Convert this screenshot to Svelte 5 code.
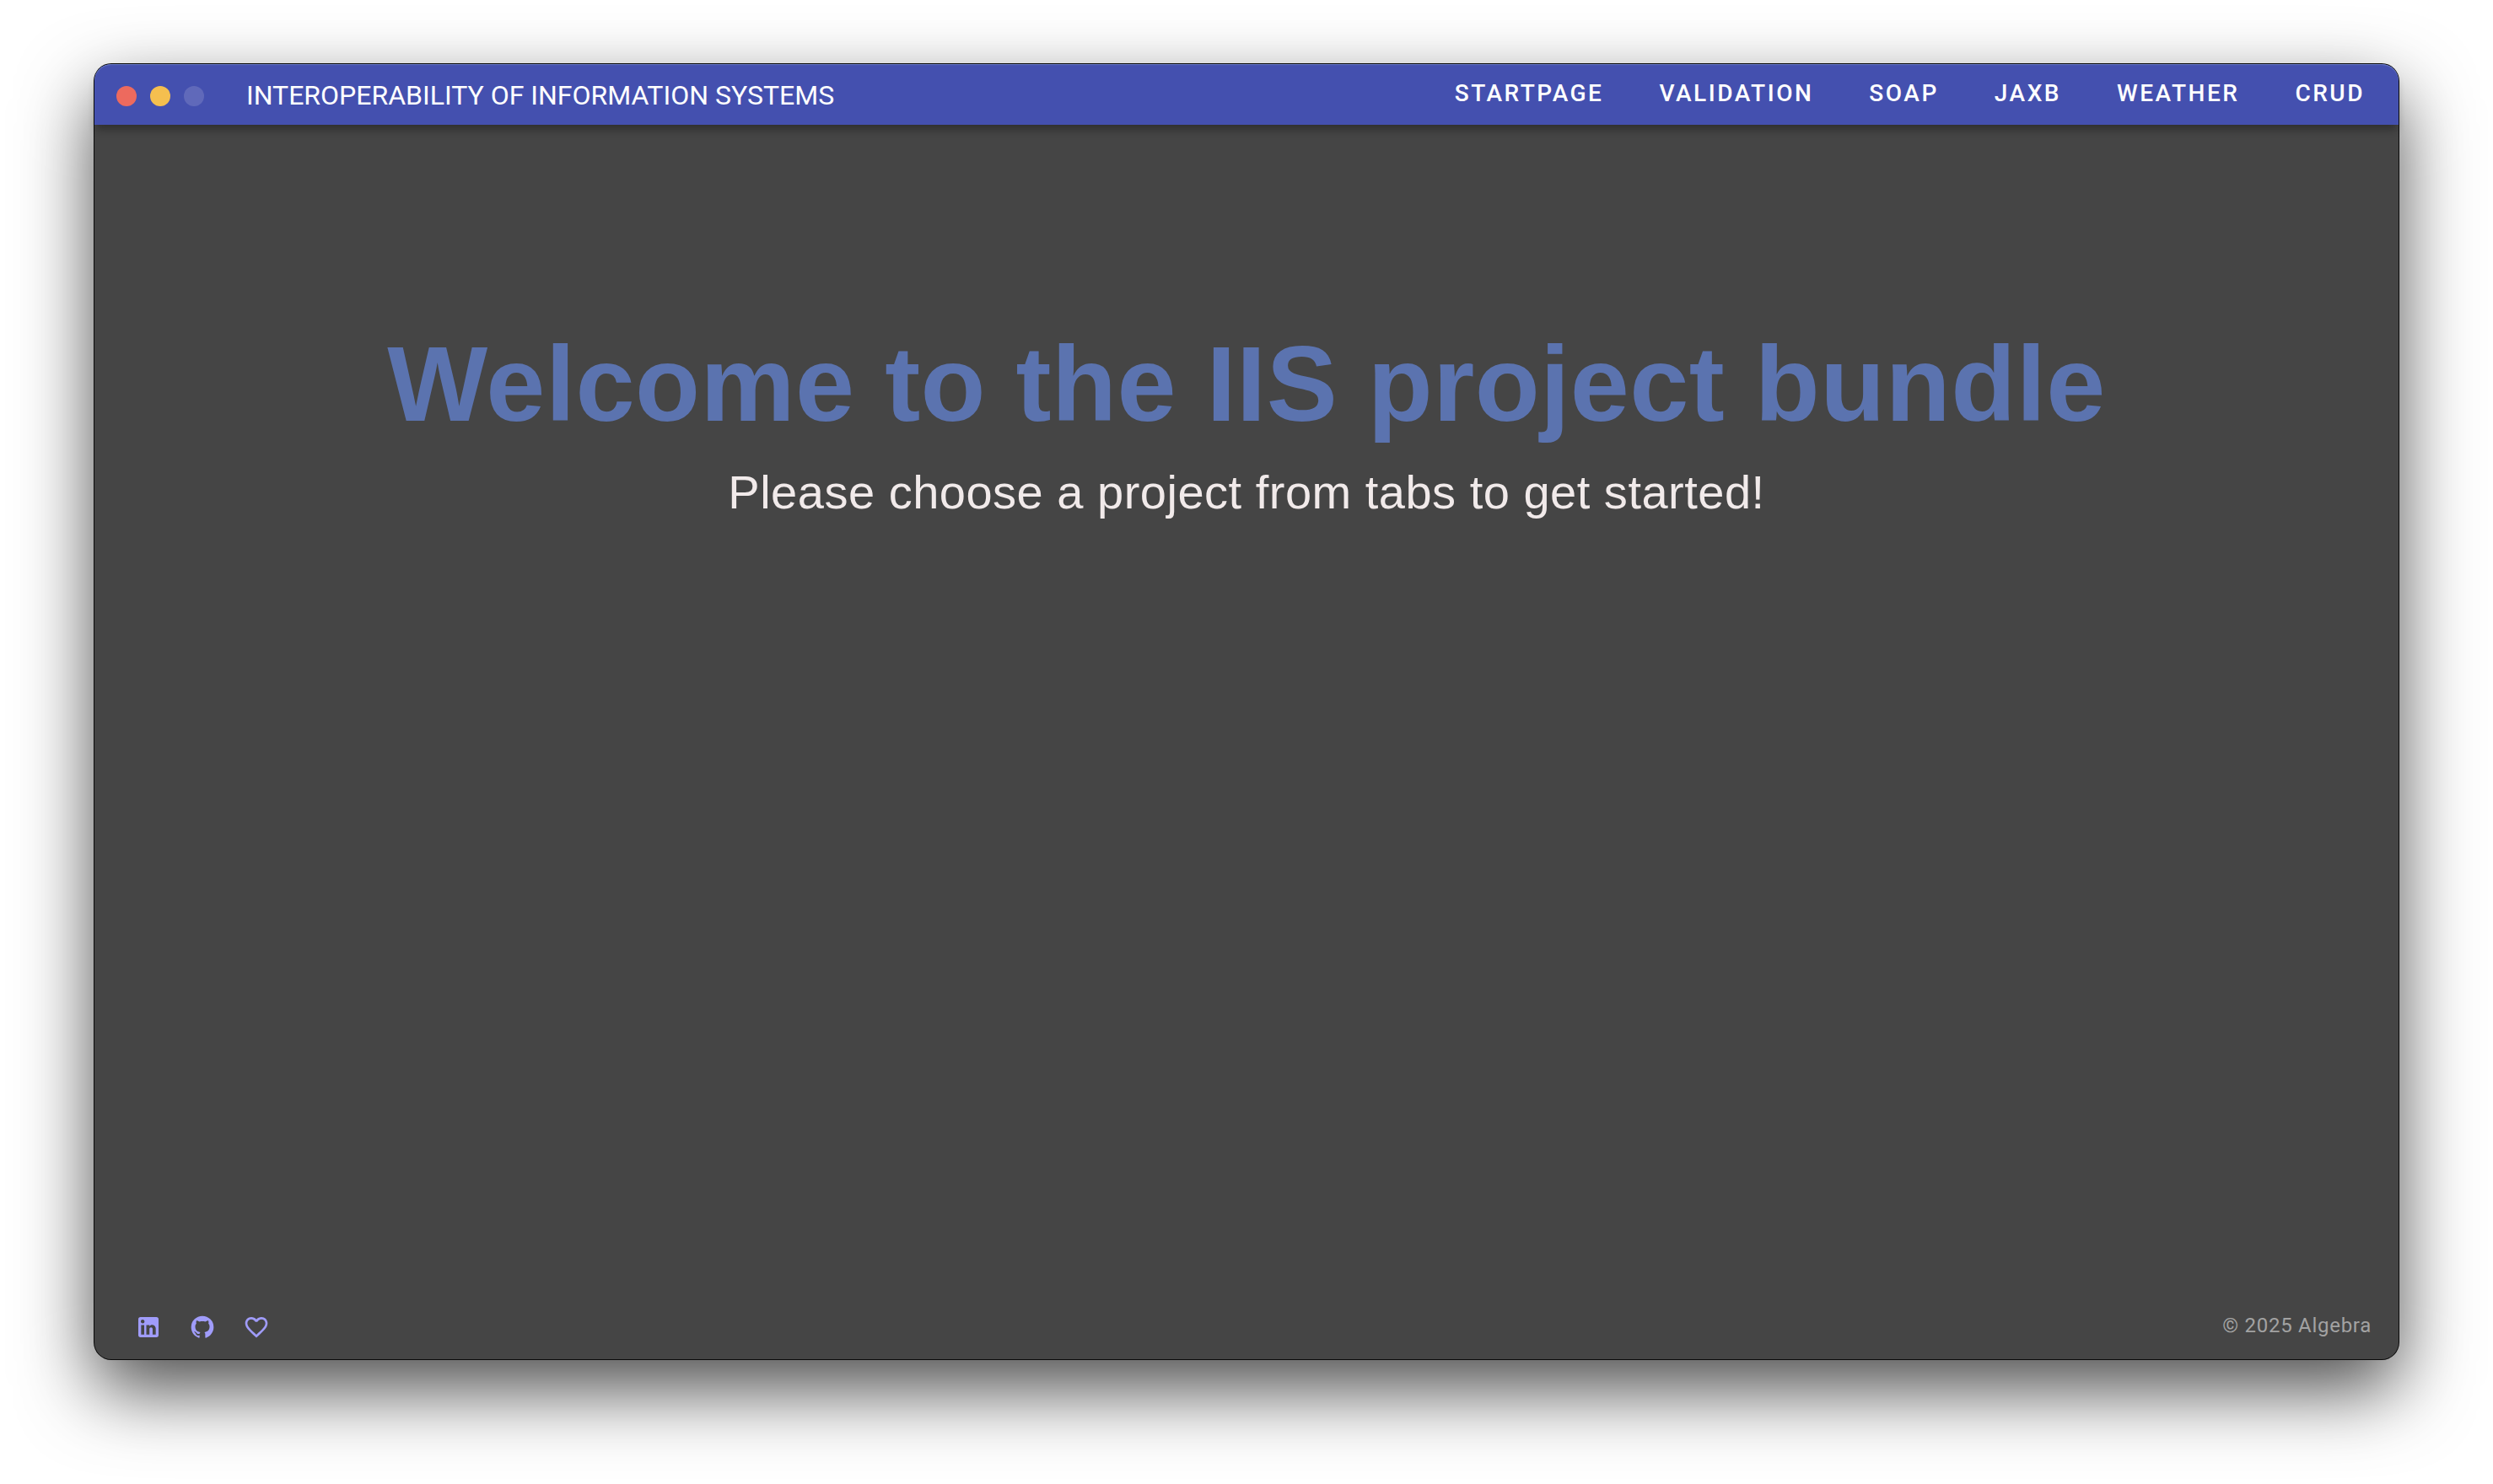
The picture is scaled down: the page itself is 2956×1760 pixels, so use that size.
<script lang="ts">
  const tabs = ['Startpage', 'Validation', 'SOAP', 'JAXB', 'Weather', 'CRUD'];

  const socials = [
    {
      label: 'LinkedIn',
      path: 'M19 3A2 2 0 0 1 21 5V19A2 2 0 0 1 19 21H5A2 2 0 0 1 3 19V5A2 2 0 0 1 5 3H19M18.5 18.5V13.2A3.26 3.26 0 0 0 15.24 9.94C14.39 9.94 13.4 10.46 12.92 11.24V10.13H10.13V18.5H12.92V13.57C12.92 12.8 13.54 12.17 14.31 12.17A1.4 1.4 0 0 1 15.71 13.57V18.5H18.5M6.88 8.56A1.68 1.68 0 0 0 8.56 6.88C8.56 5.95 7.81 5.19 6.88 5.19A1.69 1.69 0 0 0 5.19 6.88C5.19 7.81 5.95 8.56 6.88 8.56M8.27 18.5V10.13H5.5V18.5H8.27Z'
    },
    {
      label: 'GitHub',
      path: 'M12,2A10,10 0 0,0 2,12C2,16.42 4.87,20.17 8.84,21.5C9.34,21.58 9.5,21.27 9.5,21C9.5,20.77 9.5,20.14 9.5,19.31C6.73,19.91 6.14,17.97 6.14,17.97C5.68,16.81 5.03,16.5 5.03,16.5C4.12,15.88 5.1,15.9 5.1,15.9C6.1,15.97 6.63,16.93 6.63,16.93C7.5,18.45 8.97,18 9.54,17.76C9.63,17.11 9.89,16.67 10.17,16.42C7.95,16.17 5.62,15.31 5.62,11.5C5.62,10.39 6,9.5 6.65,8.79C6.55,8.54 6.2,7.5 6.75,6.15C6.75,6.15 7.59,5.88 9.5,7.17C10.29,6.95 11.15,6.84 12,6.84C12.85,6.84 13.71,6.95 14.5,7.17C16.41,5.88 17.25,6.15 17.25,6.15C17.8,7.5 17.45,8.54 17.35,8.79C18,9.5 18.38,10.39 18.38,11.5C18.38,15.32 16.04,16.16 13.81,16.41C14.17,16.72 14.5,17.33 14.5,18.26C14.5,19.6 14.5,20.68 14.5,21C14.5,21.27 14.66,21.59 15.17,21.5C19.14,20.16 22,16.42 22,12A10,10 0 0,0 12,2Z'
    },
    {
      label: 'Donate',
      path: 'M12.1,18.55L12,18.65L11.89,18.55C7.14,14.24 4,11.39 4,8.5C4,6.5 5.5,5 7.5,5C9.04,5 10.54,6 11.07,7.36H12.93C13.46,6 14.96,5 16.5,5C18.5,5 20,6.5 20,8.5C20,11.39 16.86,14.24 12.1,18.55M16.5,3C14.76,3 13.09,3.81 12,5.08C10.91,3.81 9.24,3 7.5,3C4.42,3 2,5.41 2,8.5C2,12.27 5.4,15.36 10.55,20.03L12,21.35L13.45,20.03C18.6,15.36 22,12.27 22,8.5C22,5.41 19.58,3 16.5,3Z'
    }
  ];
</script>

<div class="desktop">
  <div class="window">
    <header>
      <div class="controls">
        <button class="light close" aria-label="Close"></button>
        <button class="light minimize" aria-label="Minimize"></button>
        <button class="light zoom" aria-label="Zoom" disabled></button>
      </div>
      <div class="title">INTEROPERABILITY OF INFORMATION SYSTEMS</div>
      <nav>
        {#each tabs as tab}
          <a href="#{tab.toLowerCase()}">{tab}</a>
        {/each}
      </nav>
    </header>

    <main>
      <h1>Welcome to the IIS project bundle</h1>
      <p>Please choose a project from tabs to get started!</p>
    </main>

    <footer>
      <div class="socials">
        {#each socials as social}
          <a href="#{social.label.toLowerCase()}" aria-label={social.label}>
            <svg viewBox="0 0 24 24" aria-hidden="true"><path d={social.path} /></svg>
          </a>
        {/each}
      </div>
      <small>© 2025 Algebra</small>
    </footer>
  </div>
</div>

<style>
  :global(body) {
    background: #fff;
  }

  .desktop {
    box-sizing: border-box;
    display: flex;
    min-height: 100vh;
    padding: 76px 112px 148px;
    overflow: hidden;
    font-family: Roboto, sans-serif;
  }

  .window {
    flex: 1;
    display: flex;
    flex-direction: column;
    border-radius: 20px;
    background: #454545;
    box-shadow:
      0 0 0 1px #0a0a0a,
      0 36px 88px rgba(0, 0, 0, 0.7);
  }

  header {
    box-sizing: border-box;
    display: flex;
    align-items: center;
    min-height: 72px;
    padding: 0 8px 0 26px;
    border-radius: 20px 20px 0 0;
    background: #4450af;
    box-shadow:
      inset 0 1px 1px #6a7ac6,
      0 8px 10px -2px rgba(0, 0, 0, 0.3);
    color: #fff;
  }

  .controls {
    display: flex;
    gap: 16px;
    margin-top: 4px;
  }

  .light {
    width: 24px;
    height: 24px;
    padding: 0;
    border: 0;
    border-radius: 50%;
  }

  .close {
    background: #ed6a5e;
  }

  .minimize {
    background: #f5bf4f;
  }

  .zoom {
    background: #6069ba;
  }

  .title {
    margin-left: 50px;
    padding-top: 2px;
    font-size: 32px;
    line-height: 40px;
  }

  nav {
    display: flex;
    gap: 2px;
    margin-left: auto;
  }

  nav a {
    padding: 0 32px 2px;
    color: #fff;
    font-size: 28px;
    font-weight: 500;
    line-height: 36px;
    letter-spacing: 0.09em;
    text-transform: uppercase;
    text-decoration: none;
  }

  main {
    flex: 1;
    padding: 236px 24px 24px;
    font-family: 'Liberation Sans', Arial, sans-serif;
    text-align: center;
  }

  h1 {
    margin: 0 0 24px;
    color: #5b73af;
    font-size: 126px;
    line-height: 144px;
    letter-spacing: 0.004em;
  }

  p {
    margin: 0;
    color: #f1eaea;
    font-size: 56px;
    line-height: 64px;
    letter-spacing: 0.009em;
  }

  footer {
    display: flex;
    align-items: center;
    justify-content: space-between;
    padding: 0 32px 20px 48px;
  }

  .socials {
    display: flex;
    gap: 32px;
  }

  .socials a,
  svg {
    display: block;
    width: 32px;
    height: 32px;
  }

  svg {
    fill: #a09cfa;
  }

  small {
    padding-bottom: 4px;
    color: #a2a2a2;
    font-size: 24px;
    line-height: 32px;
    letter-spacing: 0.03em;
  }
</style>
